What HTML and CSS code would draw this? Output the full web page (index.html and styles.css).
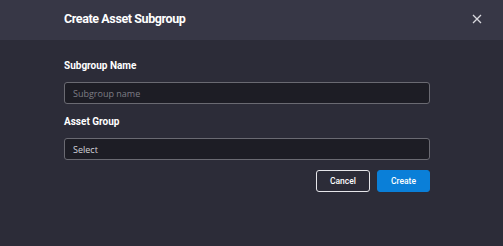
FILE: index.html
```html
<!DOCTYPE html>
<html>
<head>
<meta charset="utf-8">
<link rel="stylesheet" href="styles.css">
</head>
<body>
<div class="modal">
  <div class="header">
    <h1 class="title">Create Asset Subgroup</h1>
    <button class="close" aria-label="Close">
      <svg width="10" height="10" viewBox="0 0 10 10"><path d="M1 1L9 9M9 1L1 9" stroke="#d8d8de" stroke-width="1.3" fill="none"/></svg>
    </button>
  </div>
  <div class="body">
    <label class="label">Subgroup Name</label>
    <input class="field" type="text" placeholder="Subgroup name">
    <label class="label label-second">Asset Group</label>
    <div class="field select">Select</div>
    <div class="actions">
      <button class="btn btn-outline">Cancel</button>
      <button class="btn btn-primary">Create</button>
    </div>
  </div>
</div>
</body>
</html>
```
FILE: styles.css
```css
* { box-sizing: border-box; }
html, body { margin: 0; padding: 0; }
body {
  width: 503px;
  height: 246px;
  background: #2c2c38;
  font-family: Roboto, "Liberation Sans", sans-serif;
  overflow: hidden;
}
.modal { display: flex; flex-direction: column; height: 246px; }
.header {
  height: 40px;
  background: #373746;
  display: flex;
  align-items: center;
  justify-content: space-between;
  padding: 0 21px 0 64px;
}
.title {
  margin: 0;
  font-size: 12.5px;
  font-weight: 700;
  color: #ffffff;
  letter-spacing: -0.4px;
  padding-bottom: 4px;
}
.close {
  background: none;
  border: 0;
  padding: 0;
  width: 10px;
  height: 10px;
  display: flex;
  margin-bottom: 3px;
}
.body {
  flex: 1;
  background: #2c2c38;
  padding: 19px 73px 0 64px;
  display: flex;
  flex-direction: column;
}
.label {
  font-size: 10px;
  font-weight: 700;
  color: #ffffff;
  line-height: 14px;
  height: 14px;
}
.label-second { margin-top: 11px; }
.field {
  margin-top: 9px;
  height: 22px;
  width: 366px;
  background: #1d1d25;
  border: 1px solid #6a6a72;
  border-radius: 3px;
  padding: 0 8px;
  font-family: "Open Sans", "Noto Sans", sans-serif;
  font-size: 9px;
  color: #d4d4da;
  outline: none;
}
.field::placeholder { color: #7d7d86; }
.select { display: flex; align-items: center; }
.actions {
  margin-top: 10px;
  width: 366px;
  display: flex;
  justify-content: flex-end;
  gap: 7px;
}
.btn {
  height: 22px;
  width: 54px;
  border-radius: 3px;
  font-family: Roboto, "Liberation Sans", sans-serif;
  font-size: 8.5px;
  font-weight: 500;
  color: #ffffff;
  padding: 0;
}
.btn-outline {
  background: transparent;
  border: 1px solid #e6e6ea;
}
.btn-primary {
  background: #0a7fd8;
  border: 1px solid #0a7fd8;
  width: 53px;
}
```
